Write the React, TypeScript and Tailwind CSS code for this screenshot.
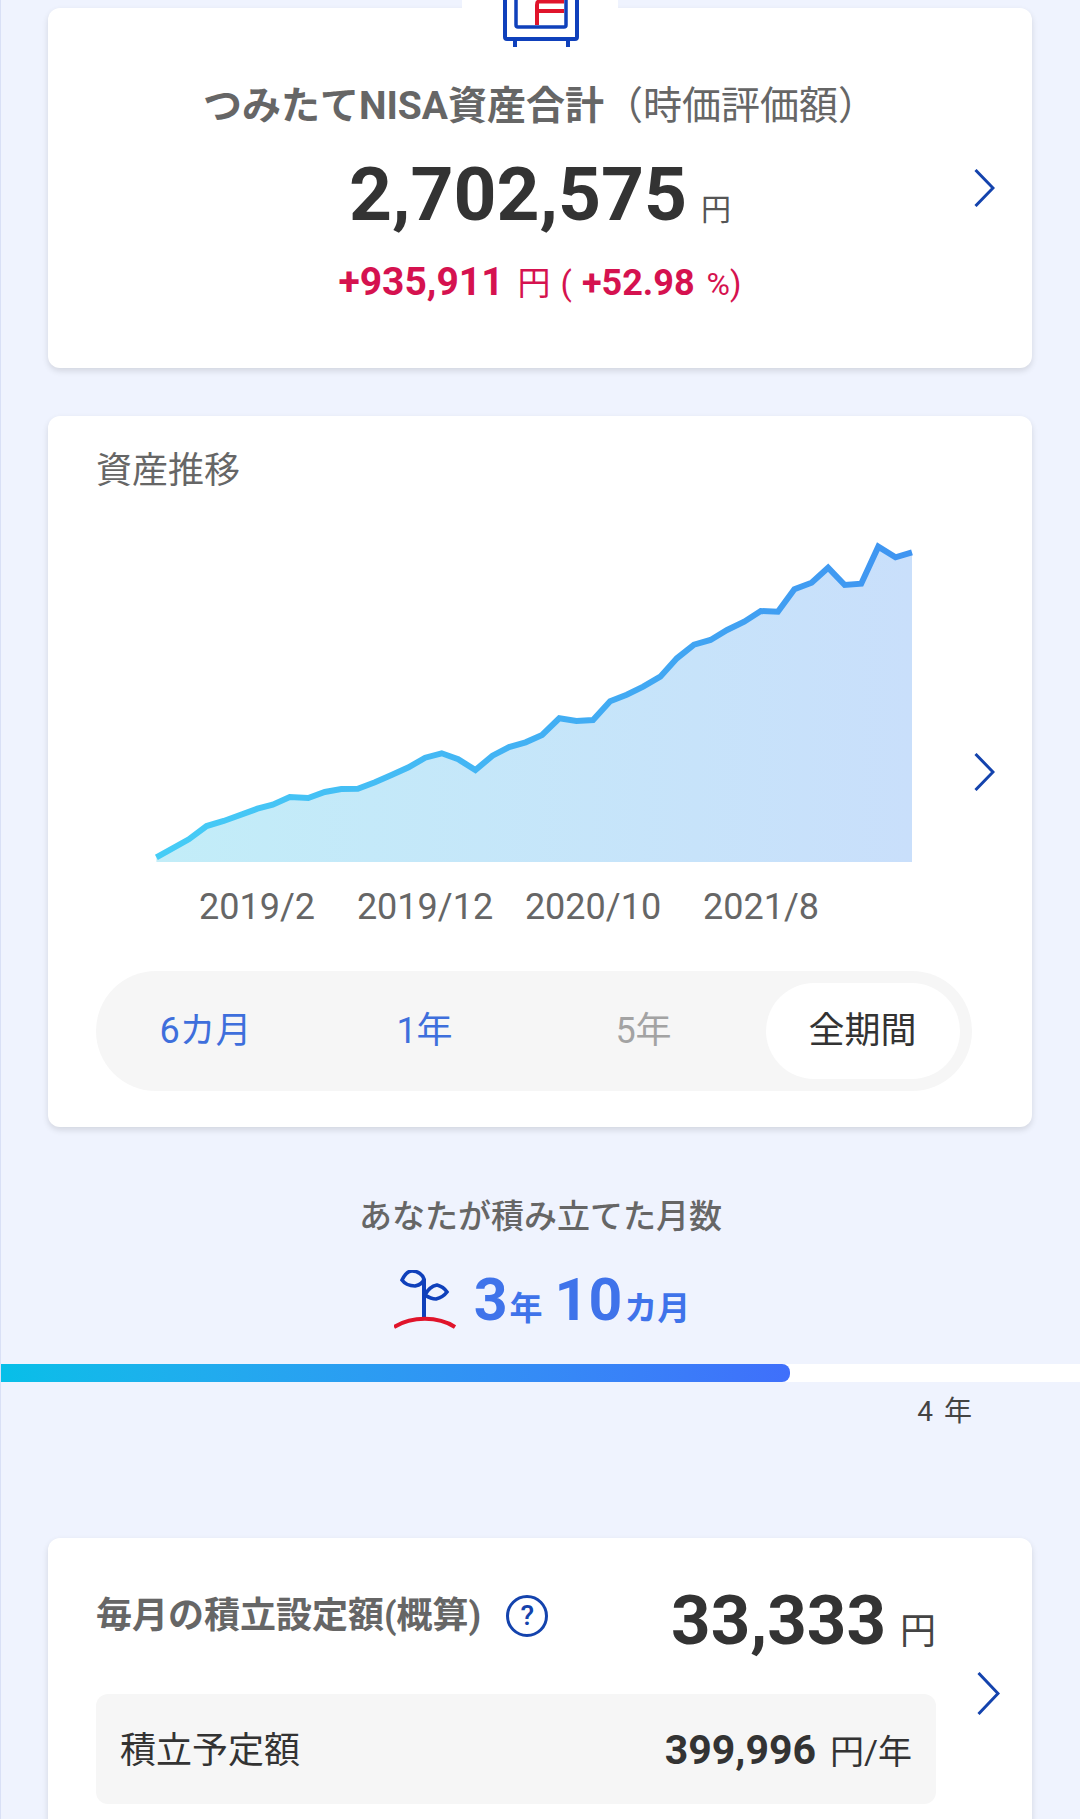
const raw: [number, number][] = [[190,1072],[243,1018],[272,978],[300,963],[355,926],[380,914],[408,891],[438,894],[465,876],[492,867],[519,866],[547,847],[575,824],[602,802],[629,773],[656,760],[683,778],[711,810],[739,767],[766,741],[793,727],[820,705],[848,655],[876,663],[903,660],[931,604],[958,584],[985,560],[1013,530],[1040,475],[1068,434],[1095,420],[1122,390],[1150,365],[1177,333],[1205,335],[1232,268],[1260,248],[1287,203],[1314,255],[1341,251],[1369,140],[1397,172],[1424,157]];
const pts = raw.map(([x, y]) => [x / 1.633 + 40 - 150, y / 3 + 500 - 535]);
const line = pts.map(([x, y]) => `${x.toFixed(1)},${y.toFixed(1)}`).join(" ");
const area = `${pts[0][0].toFixed(1)},327 ${line} ${pts[pts.length - 1][0].toFixed(1)},327`;

function Chevron({ h = 38, w = 21 }: { h?: number; w?: number }) {
  return (
    <svg width={w} height={h} viewBox={`0 0 ${w} ${h}`} fill="none">
      <path d={`M1.5 1 L${w - 2} ${h / 2} L1.5 ${h - 1}`} stroke="#1443ad" strokeWidth="3" />
    </svg>
  );
}

export default function App() {
  return (
    <div className="relative h-[1819px] w-[1080px] overflow-hidden border-l border-l-[#d9e0f6] bg-[#eff3fe] [font-family:Roboto,'Noto_Sans_CJK_JP',sans-serif]">
      <div className="ml-[47px] mr-[48px] pt-2">
        {/* Total */}
        <div className="relative flex h-[360px] flex-col items-center rounded-xl bg-white pt-[74px] shadow-[0_3px_6px_rgba(0,0,0,0.12)]">
          <div className="absolute left-[414px] top-[-8px] h-[12px] w-[156px] bg-white" />
          <svg className="absolute left-[454px] top-[-8px]" width="80" height="48" viewBox="0 0 80 48" fill="none">
            <path d="M3 0 V37 Q3 39 5 39 H73 Q75 39 75 37 V0" stroke="#0f40bb" strokeWidth="4" />
            <path d="M14 0 V25 Q14 27 16 27 H62 Q64 27 64 25 V0" stroke="#0f40bb" strokeWidth="3.5" />
            <path d="M13 40 V47 M66 40 V47" stroke="#0f40bb" strokeWidth="4" />
            <path d="M62 1.5 H37 Q35 1.5 35 5 V25 M35 11 H62" stroke="#e0142b" strokeWidth="4" />
          </svg>
          <div className="text-[39px] leading-[48px] text-[#666]">
            <span className="font-bold">つみたてNISA資産合計</span>
            <span>（時価評価額）</span>
          </div>
          <div className="mt-[19px] flex h-[90px] items-baseline text-[#333]">
            <span className="text-[75px] font-bold leading-[90px]">2,702,575</span>
            <span className="ml-[14px] text-[30px] text-[#555]">円</span>
          </div>
          <div className="mt-[17px] flex h-[48px] items-baseline text-[#d5124f]">
            <span className="text-[39px] font-bold leading-[48px]">+935,911</span>
            <span className="ml-[14px] text-[33px]">円</span>
            <span className="ml-[10px] text-[33px]">(</span>
            <span className="ml-[10px] text-[36px] font-bold">+52.98</span>
            <span className="ml-[12px] text-[32px]">%</span>
            <span className="text-[33px]">)</span>
          </div>
          <div className="absolute inset-y-0 right-[37px] flex items-center">
            <Chevron />
          </div>
        </div>

        {/* Chart */}
        <div className="relative mt-[48px] h-[711px] rounded-xl bg-white px-12 pt-[31px] shadow-[0_3px_6px_rgba(0,0,0,0.12)]">
          <div className="text-[36px] leading-[48px] text-[#666]">資産推移</div>
          <svg className="ml-[54px] mt-[40px] block" width="770" height="335" viewBox="0 0 770 335" fill="none">
            <defs>
              <linearGradient id="fillG" x1="0" y1="0" x2="1" y2="0">
                <stop offset="0" stopColor="#c2edf8" />
                <stop offset="1" stopColor="#c9dffb" />
              </linearGradient>
              <linearGradient id="lineG" gradientUnits="userSpaceOnUse" x1="6" y1="0" x2="762" y2="0">
                <stop offset="0" stopColor="#46cdf6" />
                <stop offset="1" stopColor="#3f94f1" />
              </linearGradient>
            </defs>
            <polygon points={area} fill="url(#fillG)" />
            <polyline points={line} stroke="url(#lineG)" strokeWidth="6" strokeLinejoin="miter" />
          </svg>
          <div className="ml-[77px] mt-[13px] grid w-[672px] grid-cols-4 text-center text-[36px] leading-[48px] text-[#666]">
            <span>2019/2</span>
            <span>2019/12</span>
            <span>2020/10</span>
            <span>2021/8</span>
          </div>
          <div className="mt-[40px] grid h-[120px] w-[876px] grid-cols-4 items-center justify-items-center rounded-full bg-[#f6f6f6] text-[36px]">
            <span className="text-[#3e6fdc]">6カ月</span>
            <span className="text-[#3e6fdc]">1年</span>
            <span className="text-[#a3a3a3]">5年</span>
            <span className="flex h-[96px] w-[194px] items-center justify-center rounded-full bg-white text-[#333]">全期間</span>
          </div>
          <div className="absolute inset-y-0 right-[37px] flex items-center">
            <Chevron />
          </div>
        </div>
      </div>

      {/* Months */}
      <div className="mt-[66px] text-center text-[33px] font-medium leading-[48px] text-[#666]">あなたが積み立てた月数</div>
      <div className="ml-[3px] mt-[24px] flex h-[70px] items-center justify-center text-[#3f73ea]">
        <svg className="mr-[18px]" width="62" height="60" viewBox="0 0 62 60" fill="none">
          <path d="M8 10 C11 4 15 1 18 1 C24 1 29 5 30 9 C29 13 26 15 21 16 C15 16 10 13 8 10 Z" stroke="#0f40bb" strokeWidth="3.6" />
          <path d="M31 25 C34 19 38 16 43 15 C47 16 51 19 53 22 C50 26 46 28 42 29 C38 29 34 27 31 25 Z" stroke="#0f40bb" strokeWidth="3.6" />
          <path d="M30 9 V49" stroke="#0f40bb" strokeWidth="4" />
          <path d="M0 57 C18 46 44 46 61 57" stroke="#e0142b" strokeWidth="4" />
        </svg>
        <span className="flex items-baseline font-bold">
          <span className="text-[59px]">3</span>
          <span className="ml-[2px] text-[33px]">年</span>
          <span className="ml-[12px] text-[59px]">10</span>
          <span className="ml-[2px] text-[33px]">カ月</span>
        </span>
      </div>

      {/* Progress */}
      <div className="-ml-px mt-[29px] h-[18px] bg-white">
        <div className="h-full w-[790px] rounded-r-lg bg-gradient-to-r from-[#06bfe8] to-[#3f6ffb]" />
      </div>
      <div className="mr-[106px] mt-[12px] text-right text-[28px] leading-[36px] tracking-[2px] text-[#444]">4 年</div>

      {/* Monthly */}
      <div className="relative mb-0 ml-[47px] mr-[48px] mt-[108px] h-[320px] rounded-xl bg-white px-12 pt-[30px] shadow-[0_3px_6px_rgba(0,0,0,0.12)]">
        <div className="flex h-[96px] w-[840px] items-center">
          <span className="text-[36px] font-bold text-[#666]">毎月の積立設定額(概算)</span>
          <span className="ml-[25px] flex h-[42px] w-[42px] items-center justify-center rounded-full border-[3px] border-[#1443ad] text-[28px] font-medium leading-none text-[#1443ad]">?</span>
          <span className="ml-auto mt-[10px] flex items-baseline text-[#333]">
            <span className="text-[69px] font-bold">33,333</span>
            <span className="ml-[14px] text-[36px] text-[#444]">円</span>
          </span>
        </div>
        <div className="mt-[30px] flex h-[110px] w-[840px] items-center justify-between rounded-xl bg-[#f6f6f6] px-6 text-[36px] text-[#333]">
          <span className="mt-[3px]">積立予定額</span>
          <span className="mt-[3px] flex items-baseline">
            <span className="text-[41px] font-bold">399,996</span>
            <span className="ml-[14px] text-[34px]">円/年</span>
          </span>
        </div>
        <div className="absolute right-[32px] top-[134px]">
          <Chevron h={43} w={23} />
        </div>
      </div>
    </div>
  );
}
